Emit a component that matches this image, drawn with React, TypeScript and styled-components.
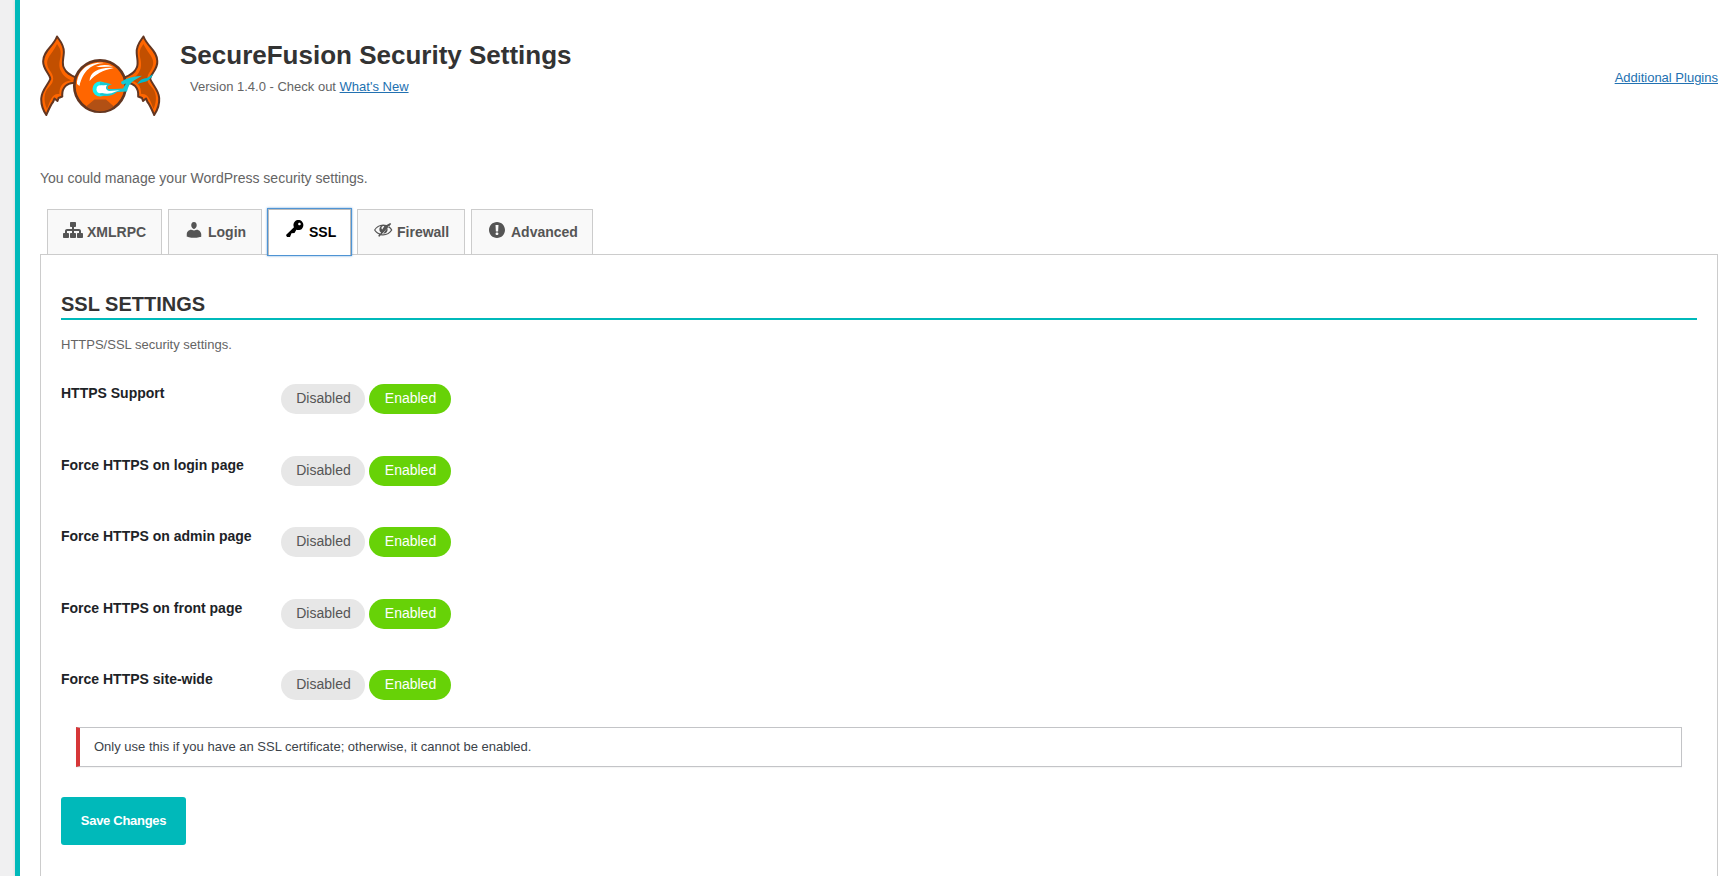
import React from 'react';
import styled, { createGlobalStyle, css } from 'styled-components';

const GlobalStyle = createGlobalStyle`
  * { box-sizing: border-box; }
  body {
    margin: 0;
    background: #f0f0f1;
    font-family: "Liberation Sans", Arial, sans-serif;
    font-size: 13px;
    color: #646464;
    overflow: hidden;
  }
`;

const Page = styled.div`
  height: 876px;
  padding-left: 15px;
  overflow: hidden;
`;

const Wrap = styled.main`
  height: 100%;
  padding: 32px 17px 0 20px;
  background: #fff;
  border-left: 5px solid #00b9ba;
  box-shadow: 0 0 3px rgba(0, 0, 0, 0.12);
`;

const Header = styled.header`
  display: flex;
  height: 136px;
`;

const Logo = styled.svg`
  display: block;
  width: 122px;
  height: 88px;
  flex: none;
`;

const HeaderText = styled.div`
  flex: 1;
  padding-left: 18px;
`;

const Title = styled.h1`
  margin: 7px 0 0;
  font-size: 26px;
  line-height: 32px;
  font-weight: 700;
  color: #333;
`;

const Version = styled.p`
  margin: 8px 0 0 10px;
  line-height: 16px;
`;

const Link = styled.a`
  color: #2271b1;
  text-decoration: underline;
`;

const Extra = styled.div`
  padding-top: 38px;
  line-height: 16px;
`;

const Intro = styled.p`
  margin: 0;
  font-size: 14px;
  line-height: 20px;
`;

const Tabs = styled.nav`
  display: flex;
  gap: 6px;
  margin-top: 21px;
  padding-left: 7px;
  height: 45px;
`;

const Tab = styled.a<{ $width: number; $active?: boolean }>`
  display: flex;
  align-items: center;
  width: ${(p) => p.$width}px;
  height: 45px;
  padding-left: 15px;
  border: 1px solid #ccc;
  border-bottom: 0;
  background: #f9f9f9;
  color: #555;
  font-size: 14px;
  font-weight: 700;
  white-space: nowrap;
  ${(p) =>
    p.$active &&
    css`
      height: 46px;
      padding-left: 16px;
      padding-bottom: 2px;
      background: #fff;
      color: #000;
      border-color: #bbb;
      box-shadow: 0 0 0 1px #4f94d4, 0 0 2px 1px rgba(79, 148, 212, 0.8);
      z-index: 1;
    `}
`;

const TabIcon = styled.svg`
  width: 20px;
  height: 20px;
  flex: none;
  margin: -5px 4px 0 0;
  fill: currentColor;
`;

const Panel = styled.section`
  height: 640px;
  padding: 36px 20px 0;
  border: 1px solid #ccc;
`;

const SectionTitle = styled.h2`
  margin: 0;
  height: 29px;
  border-bottom: 2px solid #00b9ba;
  font-size: 20px;
  line-height: 27px;
  color: #333;
`;

const Description = styled.p`
  margin: 17px 0 0;
  line-height: 16px;
`;

const Rows = styled.div`
  margin-top: 31px;
`;

const Row = styled.div`
  display: flex;
  height: 71.5px;
`;

const Label = styled.div`
  width: 220px;
  padding-top: 0.4px;
  color: #1d2327;
  font-size: 14px;
  font-weight: 700;
  line-height: 18px;
`;

const Toggle = styled.div`
  display: flex;
  gap: 4px;
`;

const Pill = styled.span<{ $on?: boolean }>`
  width: ${(p) => (p.$on ? 82 : 84)}px;
  height: 30px;
  padding-left: 1px;
  border-radius: 15px;
  background: ${(p) => (p.$on ? '#67d207' : '#e7e7e7')};
  color: ${(p) => (p.$on ? '#fff' : '#555')};
  font-size: 14px;
  line-height: 28px;
  text-align: center;
`;

const Notice = styled.div`
  height: 40px;
  margin: -14.5px 15px 0;
  padding-left: 14px;
  border: 1px solid #c3c4c7;
  border-left: 4px solid #d63638;
  box-shadow: 0 1px 1px rgba(0, 0, 0, 0.04);
  color: #3c434a;
  line-height: 38px;
`;

const Save = styled.button`
  display: block;
  width: 125px;
  height: 48px;
  margin-top: 30px;
  padding: 0 0 2px;
  border: 0;
  border-radius: 3px;
  background: #00b9ba;
  color: #fff;
  font-family: inherit;
  font-size: 13px;
  font-weight: 600;
  letter-spacing: -0.3px;
`;

const icons = {
  network: 'M18 13h1c.55 0 1 .45 1 1.01v2.98c0 .56-.45 1.01-1 1.01h-4c-.55 0-1-.45-1-1.01v-2.98c0-.56.45-1.01 1-1.01h1v-2h-5v2h1c.55 0 1 .45 1 1.01v2.98c0 .56-.45 1.01-1 1.01H8c-.55 0-1-.45-1-1.01v-2.98c0-.56.45-1.01 1-1.01h1v-2H4v2h1c.55 0 1 .45 1 1.01v2.98C6 17.55 5.55 18 5 18H1c-.55 0-1-.45-1-1.01v-2.98C0 13.45.45 13 1 13h1v-2c0-1.1.9-2 2-2h5V7H8c-.55 0-1-.45-1-1.01V3.01C7 2.45 7.45 2 8 2h4c.55 0 1 .45 1 1.01v2.98C13 6.55 12.55 7 12 7h-1v2h5c1.1 0 2 .9 2 2v2z',
  user: 'M10 8.9c-2.27 0-2.73-3.09-2.73-3.09C7 4.02 7.82 2 9.97 2c2.16 0 2.98 2.02 2.71 3.81 0 0-.41 3.09-2.68 3.09zM10 10.6L12.72 9.7c2.39 0 4.52 2.33 4.52 4.53v2.49s-3.65 1.13-7.24 1.13c-3.65 0-7.24-1.13-7.24-1.13v-2.49c0-2.25 1.94-4.48 4.47-4.48z',
  key: 'M16.95 2.58c1.96 1.95 1.96 5.12 0 7.07-1.51 1.51-3.75 1.84-5.59 1.01l-1.87 3.31-2.99.31L5 18H2l-1-2 7.95-7.69c-.92-1.87-.62-4.18.93-5.73 1.95-1.96 5.12-1.96 7.07 0zm-2.51 3.79c.74 0 1.33-.6 1.33-1.34 0-.73-.59-1.33-1.33-1.33-.73 0-1.33.6-1.33 1.33 0 .74.6 1.34 1.33 1.34z',
  hidden: 'M17.2 3.1l1 .9-11.8 12.8-1.3-.8 1.1-1.6C4 13.6 2.3 12.2 1 10c2-3.3 5.3-5.5 9.2-5.5 1.2 0 2.3.2 3.4.5zM7.8 6.1C5.5 6.7 3.6 8.1 2.3 10c1.3 1.8 3 3 5 3.6l.8-.9C6.2 11.5 5.6 8.6 7.8 6.1zm3.5.2c-1.2-.6-2.6.2-2.8 1.5-.1.7.2 1.4.7 1.8zM15.7 6.1c1.6.9 2.8 2.3 3.7 3.9-2 3.4-5.3 5.5-9.3 5.5-.8 0-1.6-.1-2.3-.2l1-1.1c3.7.5 7.2-1.1 9.2-4.2-.8-1.2-1.9-2.2-3.2-2.9zM14.4 7.9c.8 3.3-.9 5.5-4.3 5.8z',
  warning: 'M10 2c4.42 0 8 3.58 8 8s-3.58 8-8 8-8-3.58-8-8 3.58-8 8-8zm1.13 9.38l.35-6.46H8.52l.35 6.46h2.26zm-.09 3.36c.24-.23.37-.55.37-.96 0-.42-.12-.74-.36-.97s-.59-.35-1.06-.35-.82.12-1.07.35-.37.55-.37.97c0 .41.13.73.38.96.26.23.61.34 1.06.34s.8-.11 1.05-.34z',
};

const tabs: { label: string; icon: keyof typeof icons; width: number; active?: boolean }[] = [
  { label: 'XMLRPC', icon: 'network', width: 115 },
  { label: 'Login', icon: 'user', width: 94 },
  { label: 'SSL', icon: 'key', width: 83, active: true },
  { label: 'Firewall', icon: 'hidden', width: 108 },
  { label: 'Advanced', icon: 'warning', width: 122 },
];

const settings = [
  'HTTPS Support',
  'Force HTTPS on login page',
  'Force HTTPS on admin page',
  'Force HTTPS on front page',
  'Force HTTPS site-wide',
];

const Wing = () => (
  <>
    <path
      d="M17 4.5C20 9 24.5 13 23.8 21C23.5 27 21.5 32 24 36C26 41 30 43 36 45.5L35 51C27 50 21.5 56 22.3 64.5L18.5 66L17.5 69L14.5 66.5L13 70C10.5 73 8.5 78 6.3 83C3 78 .8 73 1.3 66C1.8 58 8 53 10.3 47C10 42 2.5 37 3.2 29C3.7 18 13 15 17 4.5Z"
      fill="#ff6600" stroke="#633621" strokeWidth="2" strokeLinejoin="round"
    />
    <path
      d="M17 12C20 16 21.5 19 20.5 25C19 31 19 36 21 39C23 44 27 46 31 48.5C23 49 19.5 54 19.3 62C12 61 10 69 7 77C3 68 4 60 9 55C15 49 14 44 9.5 38C3 27 12 23 17 12Z"
      fill="#c24f00"
    />
  </>
);

const BrandLogo = () => (
  <Logo viewBox="0 0 122 88">
    <Wing />
    <g transform="translate(120.5 0) scale(-1 1)"><Wing /></g>
    <circle cx="60" cy="54" r="25.7" fill="#ff6600" stroke="#633621" strokeWidth="2.7" />
    <path d="M54.5 67.5H66L74 74.5Q61 84 46 74.5Z" fill="#b25014" />
    <path d="M37 52C37 39 48 29 64 31C52 32 43 38 39.5 54ZM49.5 49C50 40 59 35 74 36C62 38.5 56 42 49.5 49Z" fill="#fff" />
    <path d="M56 35Q63 31.5 73 34.5L60 35Z" fill="#fff" />
    <circle cx="60" cy="57" r="7.5" fill="#16eeee" />
    <path
      d="M60 50Q67 50 72 52.5Q66 53 68 57L75 57L83 56.5L86 51.5Q81 54 81 50Q88 44.5 102 43.8L94 48.5Q89 51 87 59.5L77 60Q70 66 60 63Z"
      fill="#16c8d3"
    />
    <path d="M97 52Q101 46 107 46L113 42Q111 49 102 50.5Z" fill="#00b9cc" />
    <circle cx="60.5" cy="57.3" r="4" fill="#fff" />
    <path d="M61 53.5L67 53Q64 57 69 59L80 58.2L76 59.5Q69 63 62 61Z" fill="#fff" />
  </Logo>
);

export default function App() {
  return (
    <Page>
      <GlobalStyle />
      <Wrap>
        <Header>
          <BrandLogo />
          <HeaderText>
            <Title>SecureFusion Security Settings</Title>
            <Version>Version 1.4.0 - Check out <Link>What's New</Link></Version>
          </HeaderText>
          <Extra><Link>Additional Plugins</Link></Extra>
        </Header>
        <Intro>You could manage your WordPress security settings.</Intro>
        <Tabs>
          {tabs.map((t) => (
            <Tab key={t.label} $width={t.width} $active={t.active}>
              <TabIcon viewBox="0 0 20 20"><path fillRule="evenodd" d={icons[t.icon]} /></TabIcon>
              {t.label}
            </Tab>
          ))}
        </Tabs>
        <Panel>
          <SectionTitle>SSL SETTINGS</SectionTitle>
          <Description>HTTPS/SSL security settings.</Description>
          <Rows>
            {settings.map((s) => (
              <Row key={s}>
                <Label>{s}</Label>
                <Toggle>
                  <Pill>Disabled</Pill>
                  <Pill $on>Enabled</Pill>
                </Toggle>
              </Row>
            ))}
          </Rows>
          <Notice>Only use this if you have an SSL certificate; otherwise, it cannot be enabled.</Notice>
          <Save>Save Changes</Save>
        </Panel>
      </Wrap>
    </Page>
  );
}
